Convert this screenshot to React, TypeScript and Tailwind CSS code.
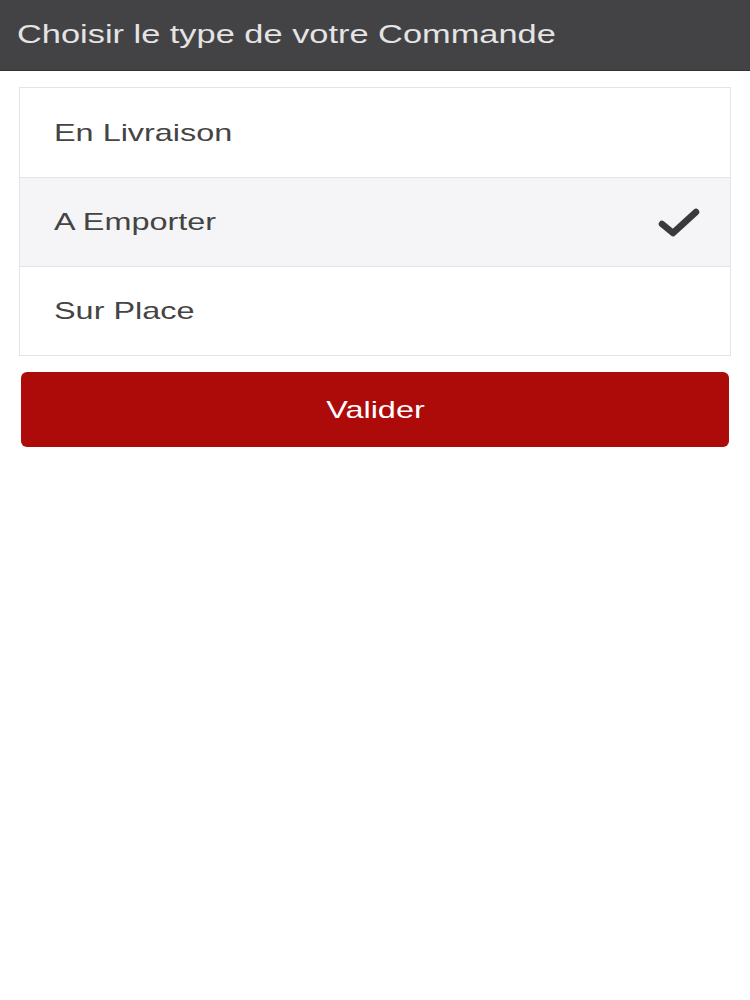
import React from "react";

const options = ["En Livraison", "A Emporter", "Sur Place"];

export default function App() {
  const selected = 1;
  return (
    <div className="min-h-[1000px] bg-white" style={{ fontFamily: "'Liberation Sans', Arial, sans-serif" }}>
      <div className="h-[71px] bg-[#434244] border-b border-[#333] flex items-center pl-[17px]">
        <span className="inline-block origin-left scale-x-[1.375] text-[25px] text-[#e4e4e4] whitespace-nowrap">
          Choisir le type de votre Commande
        </span>
      </div>
      <div className="px-[19px] pt-[16px]">
        <div className="border border-[#e4e4e7]">
          {options.map((o, i) => (
            <div
              key={o}
              className={`h-[89px] flex items-center justify-between pl-[34px] pr-[30px] ${i > 0 ? "border-t border-[#e4e4e7]" : ""} ${i === selected ? "bg-[#f5f5f7]" : "bg-white"}`}
            >
              <span className="inline-block origin-left scale-x-[1.35] text-[24px] text-[#444] whitespace-nowrap">{o}</span>
              {i === selected && (
                <svg width="42" height="32" viewBox="0 0 42 32">
                  <path d="M4 18 L15 27 L38 6" fill="none" stroke="#3a3a3c" strokeWidth="6.5" strokeLinecap="round" strokeLinejoin="round" />
                </svg>
              )}
            </div>
          ))}
        </div>
        <button className="mt-[16px] mx-[2px] w-[708px] h-[75px] rounded-[6px] bg-[#ad0a0a] text-white text-[24px] flex items-center justify-center">
          <span className="inline-block scale-x-[1.35]">Valider</span>
        </button>
      </div>
    </div>
  );
}
